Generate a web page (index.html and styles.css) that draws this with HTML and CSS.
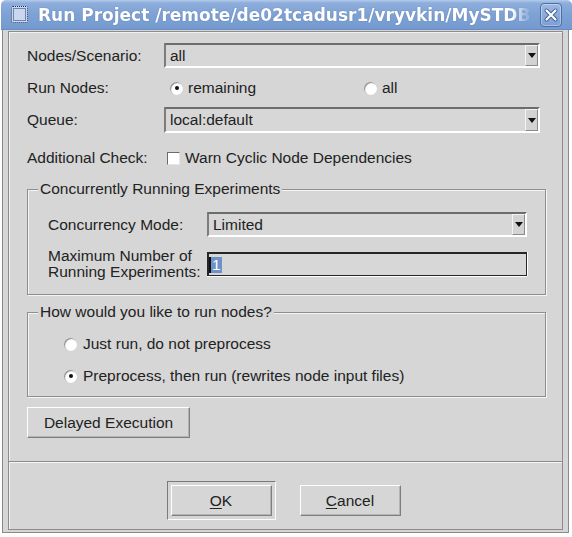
FILE: index.html
```html
<!DOCTYPE html>
<html>
<head>
<meta charset="utf-8">
<link rel="stylesheet" href="styles.css">
</head>
<body>
<div class="window">
  <div class="titlebar">
    <span class="win-icon"></span>
    <span class="title">Run Project /remote/de02tcadusr1/vryvkin/MySTDB</span>
    <span class="close">
      <svg width="22" height="24" viewBox="0 0 22 24"><path d="M6.5 7.5 L15.5 16.5 M15.5 7.5 L6.5 16.5" stroke="#3f5f94" stroke-width="4" stroke-linecap="round"/><path d="M6.5 7.5 L15.5 16.5 M15.5 7.5 L6.5 16.5" stroke="#ffffff" stroke-width="2.2" stroke-linecap="round"/></svg>
    </span>
  </div>
  <div class="frame">
    <div class="panel">
      <div class="content">
        <div class="row r1">
          <span class="label">Nodes/Scenario:</span>
          <div class="combo"><span class="value">all</span><span class="arrow"></span></div>
        </div>
        <div class="row r2">
          <span class="label">Run Nodes:</span>
          <div class="radios">
            <span class="opt first"><span class="radio on"></span>remaining</span>
            <span class="opt"><span class="radio"></span>all</span>
          </div>
        </div>
        <div class="row r3">
          <span class="label">Queue:</span>
          <div class="combo"><span class="value">local:default</span><span class="arrow"></span></div>
        </div>
        <div class="row r4">
          <span class="label">Additional Check:</span>
          <span class="opt checkopt"><span class="check"></span>Warn Cyclic Node Dependencies</span>
        </div>
        <fieldset class="group g1">
          <legend>Concurrently Running Experiments</legend>
          <div class="group-body">
            <div class="grow gr1">
              <span class="glabel">Concurrency Mode:</span>
              <div class="combo"><span class="value">Limited</span><span class="arrow"></span></div>
            </div>
            <div class="grow gr2">
              <span class="glabel two">Maximum Number of<br>Running Experiments:</span>
              <div class="entry"><span class="cursor"></span><span class="sel">1</span></div>
            </div>
          </div>
        </fieldset>
        <fieldset class="group g2">
          <legend>How would you like to run nodes?</legend>
          <div class="group-body radio-list">
            <span class="opt ropt"><span class="radio"></span>Just run, do not preprocess</span>
            <span class="opt ropt"><span class="radio on"></span>Preprocess, then run (rewrites node input files)</span>
          </div>
        </fieldset>
        <button class="btn delayed">Delayed Execution</button>
      </div>
      <div class="separator"></div>
      <div class="actions">
        <span class="default-ring"><button class="btn action"><u>O</u>K</button></span>
        <button class="btn action"><u>C</u>ancel</button>
      </div>
    </div>
  </div>
</div>
</body>
</html>
```
FILE: styles.css
```css
* { box-sizing: border-box; }
html, body { margin: 0; padding: 0; background: #ffffff; }
body {
  font-family: "Liberation Sans", Arial, sans-serif;
  font-size: 15.5px;
  color: #222222;
}
.window { width: 572px; }

.titlebar {
  margin-left: 1px;
  width: 571px;
  height: 30px;
  border-radius: 5px 5px 0 0;
  background: linear-gradient(#b3cbea 0px, #8eaedc 3px, #7ea2d5 14px, #7399cf 30px);
  border-bottom: 1px solid #6a8cc2;
  display: flex;
  align-items: center;
}
.win-icon {
  width: 17px;
  height: 17px;
  margin-left: 10px;
  border: 1px dotted #1d2d4d;
  outline: 1px solid #6c86b3;
  outline-offset: -3px;
  background: #c9d8ee;
  border-radius: 2px;
  flex: none;
}
.title {
  margin-left: 10px;
  flex: none;
  white-space: nowrap;
  font-family: "DejaVu Sans", sans-serif;
  font-weight: bold;
  font-size: 17px;
  line-height: 30px;
  color: #ffffff;
  text-shadow: 0 0 1px rgba(40, 60, 110, 0.6);
  -webkit-mask-image: linear-gradient(to right, #000 474px, rgba(0,0,0,0.2) 488px);
  mask-image: linear-gradient(to right, #000 474px, rgba(0,0,0,0.2) 488px);
}
.close {
  flex: none;
  width: 22px;
  height: 24px;
  margin-left: auto;
  margin-right: 10px;
  border: 1px solid #4d6ea6;
  border-radius: 4px;
  background: linear-gradient(#9cb8e2, #7c9fd4);
  box-shadow: inset 0 0 0 1px rgba(255, 255, 255, 0.35);
  display: flex;
  align-items: center;
  justify-content: center;
}
.close svg { display: block; margin: -1px; }

.frame {
  margin-left: 2px;
  width: 567px;
  background: #d6d6d6;
  border: 1px solid #8a8a8a;
  border-top: none;
  padding: 1px 5px 2px 5px;
}
.panel {
  border: 1px solid #8c8c8c;
  box-shadow: inset 1px 1px 0 #f2f2f2;
  background: #d6d6d6;
}
.content {
  padding: 11px 16px 0 18px;
  display: flex;
  flex-direction: column;
  align-items: flex-start;
}
.row {
  display: flex;
  align-items: center;
  width: calc(100% - 6px);
}
.r1 { height: 25px; }
.r2 { height: 24px; margin-top: 8px; }
.r3 { height: 26px; margin-top: 7px; }
.r4 { height: 24px; margin-top: 13px; }
.label { width: 137px; flex: none; white-space: nowrap; }

.combo {
  flex: 1;
  height: 100%;
  display: flex;
  align-items: stretch;
  border-top: 2px solid #6c6c6c;
  border-left: 2px solid #7d7d7d;
  border-bottom: 2px solid #ffffff;
  border-right: 2px solid #ffffff;
  background: #d7d7d7;
}
.combo .value {
  flex: 1;
  padding-left: 4px;
  display: flex;
  align-items: center;
}
.arrow {
  width: 13px;
  flex: none;
  border-left: 1px solid #f4f4f4;
  border-top: 1px solid #f4f4f4;
  border-right: 1px solid #8a8a8a;
  border-bottom: 1px solid #8a8a8a;
  background: #d3d3d3;
  display: flex;
  align-items: center;
  justify-content: center;
}
.arrow::after {
  content: "";
  width: 0;
  height: 0;
  border-left: 4px solid transparent;
  border-right: 4px solid transparent;
  border-top: 5px solid #111111;
}

.radios { display: flex; align-items: center; margin-left: 6px; }
.opt { display: flex; align-items: center; white-space: nowrap; }
.opt.first { width: 194px; }
.radio {
  width: 13px;
  height: 13px;
  border-radius: 50%;
  background: #ffffff;
  box-shadow: inset 1px 1px 1px #8a8a8a;
  margin-right: 5px;
  flex: none;
  display: flex;
  align-items: center;
  justify-content: center;
}
.radio.on::after {
  content: "";
  width: 4px;
  height: 4px;
  border-radius: 50%;
  background: #111111;
}
.checkopt { margin-left: 3px; }
.check {
  width: 13px;
  height: 13px;
  background: #ffffff;
  border-top: 1px solid #6a6a6a;
  border-left: 1px solid #6a6a6a;
  border-right: 1px solid #e6e6e6;
  border-bottom: 1px solid #e6e6e6;
  margin-right: 5px;
  flex: none;
}

.group {
  margin: 0;
  width: 519px;
  border: 1px solid #8e8e8e;
  box-shadow: inset 1px 1px 0 #f4f4f4, 1px 1px 0 #f4f4f4;
  padding: 15px 10px 14px 10px;
  min-width: 0;
}
.group legend {
  padding: 0 2px;
  line-height: 16px;
  background: #d6d6d6;
}
.g1 { margin-top: 11px; }
.g2 { margin-top: 9px; padding-top: 12px; padding-bottom: 8px; }
.group-body { padding: 0 8px 0 10px; }
.grow { display: flex; align-items: center; }
.gr1 { height: 25px; }
.gr2 { height: 32px; margin-top: 11px; }
.glabel { width: 159px; flex: none; white-space: nowrap; }
.glabel.two { line-height: 16px; }
.entry {
  flex: 1;
  height: 24px;
  border: 1px solid #262626;
  border-top-width: 2px;
  border-left-width: 2px;
  box-shadow: 0 1px 0 #ffffff, 1px 0 0 #ffffff;
  background: #d7d7d7;
  display: flex;
  align-items: center;
}
.cursor { width: 2px; height: 16px; background: #111111; flex: none; }
.sel {
  background: #6f91c9;
  color: #ffffff;
  height: 16px;
  line-height: 16px;
  padding: 0 1px;
}

.radio-list { padding-left: 26px; display: flex; flex-direction: column; }
.ropt { height: 24px; }
.ropt + .ropt { margin-top: 8px; }
.ropt .radio { margin-right: 6px; }

.btn {
  font-family: "Liberation Sans", Arial, sans-serif;
  font-size: 15.5px;
  color: #222222;
  background: #d6d6d6;
  border-top: 1px solid #ffffff;
  border-left: 1px solid #ffffff;
  border-right: 1px solid #7e7e7e;
  border-bottom: 1px solid #7e7e7e;
  box-shadow: inset -1px -1px 0 #b4b4b4;
  padding: 0;
  margin: 0;
  height: 31px;
}
.btn u { text-decoration-thickness: 1px; text-underline-offset: 2px; }
.delayed { width: 163px; margin-top: 10px; }

.separator {
  margin-top: 23px;
  height: 2px;
  border-top: 1px solid #8a8a8a;
  border-bottom: 1px solid #f6f6f6;
}
.actions {
  display: flex;
  justify-content: center;
  align-items: center;
  gap: 24px;
  padding: 18px 4px 9px 0;
}
.default-ring {
  display: flex;
  padding: 3px;
  border-top: 1px solid #7a7a7a;
  border-left: 1px solid #7a7a7a;
  border-right: 1px solid #fbfbfb;
  border-bottom: 1px solid #fbfbfb;
}
.action { width: 101px; }
```
